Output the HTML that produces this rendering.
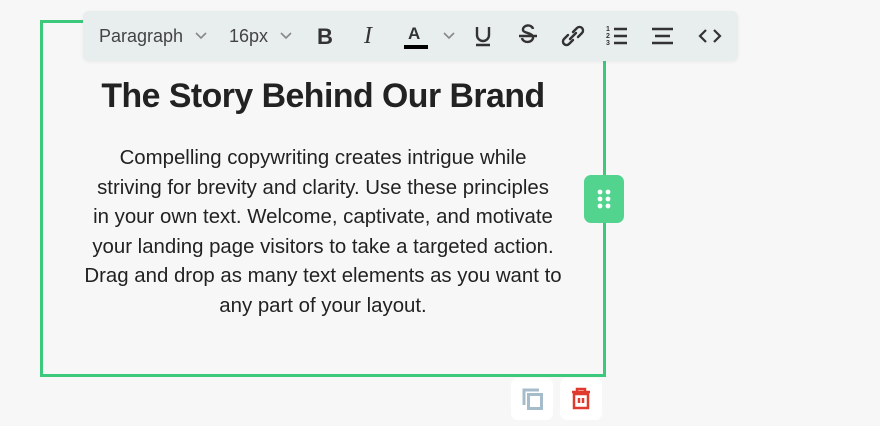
<!DOCTYPE html>
<html><head><style>
body{margin:0;width:880px;height:426px;background:#f7f7f7;font-family:"Liberation Sans",sans-serif;position:relative;overflow:hidden}
.box{position:absolute;left:40px;top:20px;width:560px;height:351px;border:3px solid #3cc97c}
.tb{position:absolute;left:83px;top:11px;width:655px;height:50px;background:#e8eded;border-radius:6px;box-shadow:0 1px 3px rgba(0,0,0,.06);color:#333}
.tb span{position:absolute;top:15px;font-size:18px;color:#444}
h1{position:absolute;left:40px;width:566px;top:77px;margin:0;text-align:center;font-size:33.8px;font-weight:bold;color:#222;letter-spacing:-0.5px}
p{position:absolute;left:40px;width:566px;top:144px;margin:0;text-align:center;font-size:20.4px;line-height:29.5px;color:#222;white-space:nowrap}
.h{position:absolute;left:584px;top:175px;width:40px;height:48px;background:#52d48f;border-radius:7px}
.btn{position:absolute;top:378px;width:42px;height:42px;background:#fff;border-radius:7px}
svg{position:absolute}
</style></head><body>
<div class="box"></div>
<h1>The Story Behind Our Brand</h1>
<p>Compelling copywriting creates intrigue while<br>striving for brevity and clarity. Use these principles<br>in your own text. Welcome, captivate, and motivate<br>your landing page visitors to take a targeted action.<br>Drag and drop as many text elements as you want to<br>any part of your layout.</p>
<div class="tb">
<span style="left:16px">Paragraph</span>
<svg style="left:112px;top:20px" width="12" height="10"><path d="M1 2l5 5 5-5" stroke="#888" stroke-width="1.6" fill="none"/></svg>
<span style="left:146px">16px</span>
<svg style="left:197px;top:20px" width="12" height="10"><path d="M1 2l5 5 5-5" stroke="#888" stroke-width="1.6" fill="none"/></svg>
<span style="left:234px;font-weight:bold;font-size:22px;top:13px;color:#333">B</span>
<span style="left:281px;font-style:italic;font-family:'Liberation Serif',serif;font-size:24px;top:12px;color:#333">I</span>
<span style="left:325px;font-size:17px;font-weight:bold;top:13px;color:#333">A</span>
<div style="position:absolute;left:321px;top:34px;width:24px;height:4px;background:#000"></div>
<svg style="left:360px;top:20px" width="12" height="10"><path d="M1 2l5 5 5-5" stroke="#888" stroke-width="1.6" fill="none"/></svg>
<svg style="left:390px;top:14px" width="20" height="22"><path d="M4 2v8a6 6 0 0 0 12 0V2M3 20h14" stroke="#333" stroke-width="2.4" fill="none"/></svg>
<svg style="left:434px;top:13px" width="22" height="24"><path d="M16 5a5 4 0 0 0-10 1c0 3 10 3 10 7a5 4 0 0 1-11 1M2 12h18" stroke="#333" stroke-width="2.4" fill="none"/></svg>
<svg style="left:477px;top:12px" width="26" height="26"><path d="M10 16l6-6M8 12l-4 4a3.5 3.5 0 0 0 5 5l4-4M18 14l4-4a3.5 3.5 0 0 0-5-5l-4 4" stroke="#333" stroke-width="2.4" fill="none" stroke-linecap="round"/></svg>
<svg style="left:523px;top:14px" width="24" height="22"><text x="0" y="6" font-size="7" font-family="Liberation Sans" font-weight="bold" fill="#333">1</text><text x="0" y="13" font-size="7" font-family="Liberation Sans" font-weight="bold" fill="#333">2</text><text x="0" y="20" font-size="7" font-family="Liberation Sans" font-weight="bold" fill="#333">3</text><path d="M8 4h13M8 11h13M8 18h13" stroke="#333" stroke-width="2.4"/></svg>
<svg style="left:568px;top:15px" width="24" height="20"><path d="M1 3h21M4 10h15M1 17h21" stroke="#333" stroke-width="2.6"/></svg>
<svg style="left:615px;top:17px" width="24" height="16"><path d="M8 2L2 8l6 6M16 2l6 6-6 6" stroke="#333" stroke-width="2.2" fill="none"/></svg>
</div>
<div class="h"><svg width="40" height="48"><g fill="#fff"><circle cx="16" cy="17" r="2.4"/><circle cx="24" cy="17" r="2.4"/><circle cx="16" cy="24" r="2.4"/><circle cx="24" cy="24" r="2.4"/><circle cx="16" cy="31" r="2.4"/><circle cx="24" cy="31" r="2.4"/></g></svg></div>
<div class="btn" style="left:511px"><svg width="42" height="42"><path d="M13 27V12h15" stroke="#a7bccb" stroke-width="3" fill="none"/><rect x="17.5" y="16.5" width="13" height="14" stroke="#a7bccb" stroke-width="3" fill="none"/></svg></div>
<div class="btn" style="left:560px"><svg width="42" height="42"><path d="M12 14h18M17 14v-3h8v3" stroke="#e03a2e" stroke-width="2.5" fill="none"/><path d="M14 16h14v14H14z" stroke="#e03a2e" stroke-width="2.5" fill="none"/><path d="M19 20v5M23 20v5" stroke="#e03a2e" stroke-width="2.5"/></svg></div>
</body></html>
